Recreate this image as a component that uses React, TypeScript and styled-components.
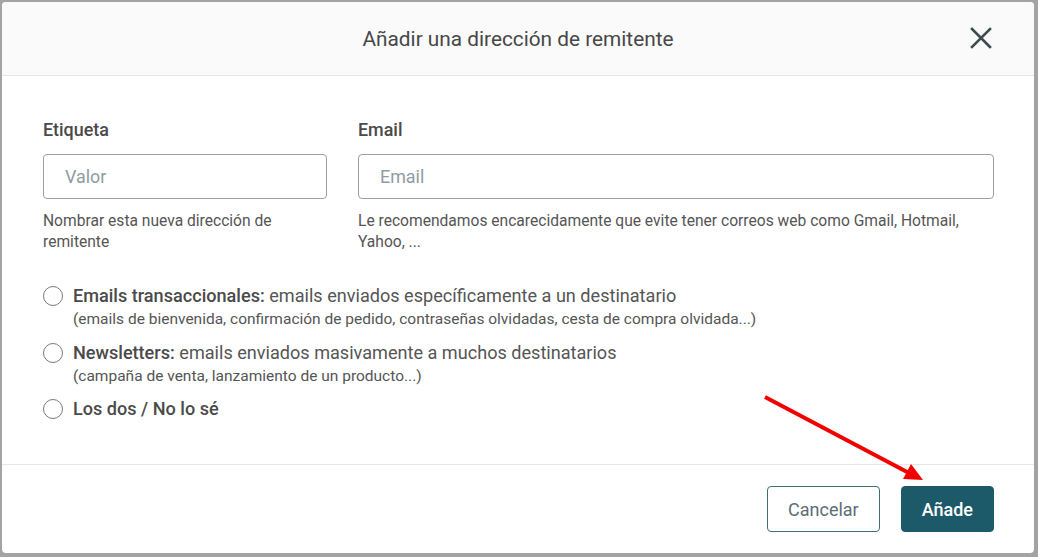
import styled, { createGlobalStyle } from "styled-components";

const GlobalStyle = createGlobalStyle`
  html, body {
    margin: 0;
    padding: 0;
    background: #a3a3a3;
    font-family: Roboto, "Liberation Sans", Arial, sans-serif;
  }
  * { box-sizing: border-box; }
`;

const Page = styled.div`
  position: relative;
  width: 1038px;
  height: 557px;
  padding: 2px 4px 4px 2px;
`;

const Modal = styled.div`
  height: 100%;
  background: #fff;
  border-radius: 4px;
  display: flex;
  flex-direction: column;
  overflow: hidden;
`;

const Header = styled.div`
  height: 74px;
  background: #fafafa;
  border-bottom: 1px solid #e6e6e6;
  display: flex;
  align-items: center;
  justify-content: center;
  position: relative;
`;

const Title = styled.h2`
  margin: 0;
  font-size: 20.8px;
  font-weight: 400;
  color: #474747;
`;

const CloseButton = styled.button`
  position: absolute;
  right: 40px;
  top: 23px;
  width: 26px;
  height: 26px;
  border: none;
  background: none;
  padding: 0;
  display: flex;
  align-items: center;
  justify-content: center;
`;

const Body = styled.div`
  flex: 1;
  padding: 44px 40px 0 41px;
  border-bottom: 1px solid #e6e6e6;
`;

const Fields = styled.div`
  display: grid;
  grid-template-columns: 284px 1fr;
  column-gap: 31px;
`;

const Field = styled.div`
  display: flex;
  flex-direction: column;
`;

const Label = styled.label`
  font-size: 17.9px;
  line-height: 20px;
  font-weight: 500;
  color: #4a4a4a;
  margin-bottom: 14px;
`;

const Input = styled.input`
  height: 45px;
  border: 1px solid #9aa0a3;
  border-radius: 4px;
  padding: 0 21px;
  font-family: inherit;
  font-size: 17.9px;
  color: #333;
  outline: none;
  &::placeholder {
    color: #8e9ca3;
  }
`;

const Help = styled.p`
  margin: 12px 0 0;
  font-size: 15.6px;
  line-height: 21px;
  color: #555;
`;

const Options = styled.div`
  margin-top: 31px;
  display: flex;
  flex-direction: column;
  gap: 10.5px;
`;

const Option = styled.label`
  display: grid;
  grid-template-columns: 20px 1fr;
  column-gap: 10px;
  align-items: start;
`;

const Radio = styled.span`
  width: 20px;
  height: 20px;
  margin-top: 2px;
  border: 1.5px solid #7a7a7a;
  border-radius: 50%;
`;

const OptionText = styled.div`
  display: flex;
  flex-direction: column;
`;

const OptionMain = styled.span`
  font-size: 18.1px;
  line-height: 24px;
  color: #555;
  b {
    font-weight: 500;
    color: #4a4a4a;
  }
`;

const OptionSub = styled.span`
  margin-top: 1px;
  font-size: 15.5px;
  line-height: 21px;
  color: #555;
`;

const Footer = styled.div`
  height: 88px;
  display: flex;
  justify-content: flex-end;
  align-items: flex-start;
  padding: 21px 40px 0 0;
  gap: 21px;
`;

const Button = styled.button<{ $primary?: boolean }>`
  height: 46px;
  padding: 0 20px;
  min-width: ${({ $primary }) => ($primary ? "93px" : "112px")};
  border-radius: 4px;
  font-family: inherit;
  font-size: 18px;
  font-weight: ${({ $primary }) => ($primary ? 500 : 400)};
  border: 1px solid ${({ $primary }) => ($primary ? "#1d5a69" : "#3f6e79")};
  background: ${({ $primary }) => ($primary ? "#1d5a69" : "#fff")};
  color: ${({ $primary }) => ($primary ? "#fff" : "#5c6e75")};
`;

const Annotation = styled.svg`
  position: absolute;
  left: 0;
  top: 0;
  pointer-events: none;
`;

export default function App() {
  return (
    <>
      <GlobalStyle />
      <Page>
        <Modal>
          <Header>
            <Title>Añadir una dirección de remitente</Title>
            <CloseButton aria-label="Cerrar">
              <svg width="22" height="22" viewBox="0 0 22 22">
                <path d="M2 2 L20 20 M20 2 L2 20" stroke="#3e4b50" strokeWidth="2.6" strokeLinecap="square" />
              </svg>
            </CloseButton>
          </Header>

          <Body>
            <Fields>
              <Field>
                <Label>Etiqueta</Label>
                <Input placeholder="Valor" />
                <Help>Nombrar esta nueva dirección de remitente</Help>
              </Field>
              <Field>
                <Label>Email</Label>
                <Input placeholder="Email" />
                <Help>
                  Le recomendamos encarecidamente que evite tener correos web como Gmail, Hotmail, Yahoo, ...
                </Help>
              </Field>
            </Fields>

            <Options>
              <Option>
                <Radio />
                <OptionText>
                  <OptionMain>
                    <b>Emails transaccionales:</b> emails enviados específicamente a un destinatario
                  </OptionMain>
                  <OptionSub>
                    (emails de bienvenida, confirmación de pedido, contraseñas olvidadas, cesta de compra olvidada...)
                  </OptionSub>
                </OptionText>
              </Option>
              <Option>
                <Radio />
                <OptionText>
                  <OptionMain>
                    <b>Newsletters:</b> emails enviados masivamente a muchos destinatarios
                  </OptionMain>
                  <OptionSub>(campaña de venta, lanzamiento de un producto...)</OptionSub>
                </OptionText>
              </Option>
              <Option>
                <Radio />
                <OptionText>
                  <OptionMain>
                    <b>Los dos / No lo sé</b>
                  </OptionMain>
                </OptionText>
              </Option>
            </Options>
          </Body>

          <Footer>
            <Button>Cancelar</Button>
            <Button $primary>Añade</Button>
          </Footer>
        </Modal>

        <Annotation width="1038" height="557">
          <line x1="765" y1="397" x2="909" y2="473" stroke="#f20000" strokeWidth="4" />
          <polygon points="923,480 903,479 911,464" fill="#f20000" />
        </Annotation>
      </Page>
    </>
  );
}
